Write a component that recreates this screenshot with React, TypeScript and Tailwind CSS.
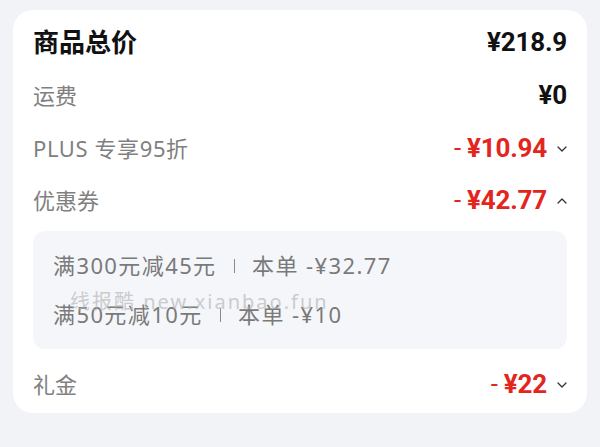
import React from "react";

const Chevron = ({ up }: { up?: boolean }) => (
  <svg width="10" height="6" viewBox="0 0 10 6" className="ml-[10px] mt-[2px]">
    <path
      d={up ? "M1 5 L5 1 L9 5" : "M1 1 L5 5 L9 1"}
      fill="none"
      stroke="#333"
      strokeWidth="1.3"
      strokeLinecap="round"
      strokeLinejoin="round"
    />
  </svg>
);

const font = { fontFamily: '"Noto Sans", "Noto Sans CJK SC", sans-serif' };
const numFont = { fontFamily: 'Roboto, "Noto Sans CJK SC", sans-serif' };

const Red = ({ v, up }: { v: string; up?: boolean }) => (
  <div className="flex items-center">
    <span className="text-[#e3261d] text-[26px] font-bold tracking-[-0.2px] leading-none" style={numFont}>
      <span className="mr-[6px] font-normal">-</span>¥{v}
    </span>
    <Chevron up={up} />
  </div>
);

const Sep = () => <span className="inline-block w-[1.5px] h-[14px] bg-[#8a8a8a] mx-[17px]" />;

export default function App() {
  return (
    <div className="w-[600px] h-[447px] bg-[#f2f3f7] pt-[10px] px-[13px] relative" style={font}>
      <div className="bg-white rounded-[20px] pl-[20px] pr-[20px] pt-[6px] pb-[1px]">
        <div className="h-[52px] flex items-center justify-between">
          <span className="text-[26px] font-bold text-[#111]">商品总价</span>
          <span className="text-[26px] font-bold text-[#111] tracking-[-0.2px] leading-none" style={numFont}>¥218.9</span>
        </div>
        <div className="h-[54px] flex items-center justify-between">
          <span className="text-[22px] text-[#808080]">运费</span>
          <span className="text-[26px] font-bold text-[#111] tracking-[-0.2px] leading-none" style={numFont}>¥0</span>
        </div>
        <div className="h-[52px] flex items-center justify-between">
          <span className="text-[22px] text-[#808080] tracking-[0.6px]">PLUS 专享95折</span>
          <Red v="10.94" />
        </div>
        <div className="h-[52px] flex items-center justify-between">
          <span className="text-[22px] text-[#808080]">优惠券</span>
          <Red v="42.77" up />
        </div>
        <div className="mt-[5px] bg-[#f5f6fa] rounded-[12px] py-[10px] pl-[20px]">
          <div className="h-[49px] flex items-center text-[22px] text-[#7a7a7a] tracking-[1.4px]">
            <span>满300元减45元</span>
            <Sep />
            <span>本单 -¥32.77</span>
          </div>
          <div className="h-[49px] flex items-center text-[22px] text-[#7a7a7a] tracking-[1.4px]">
            <span>满50元减10元</span>
            <Sep />
            <span>本单 -¥10</span>
          </div>
        </div>
        <div className="mt-[7px] h-[56px] flex items-center justify-between">
          <span className="text-[22px] text-[#808080]">礼金</span>
          <Red v="22" />
        </div>
      </div>
      <div className="absolute left-[70px] top-[287px] text-[20px] tracking-[2px] text-[#b0b0b0] opacity-60 pointer-events-none">
        线报酷 new.xianbao.fun
      </div>
    </div>
  );
}
